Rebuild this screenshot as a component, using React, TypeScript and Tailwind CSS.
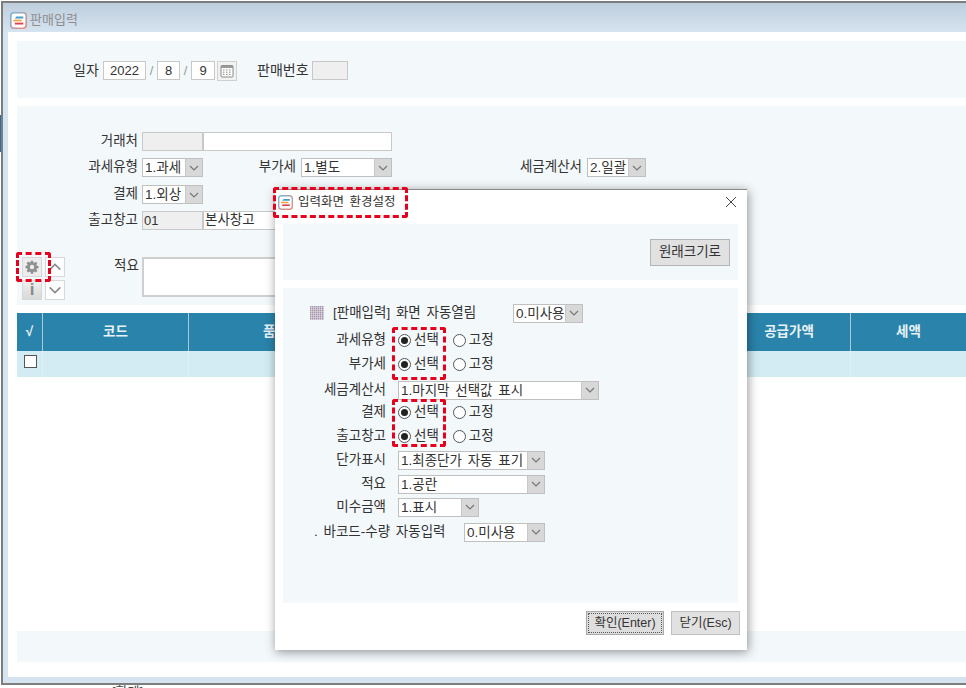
import React from "react";

const FONT = "font-['Liberation_Sans','Noto_Sans_CJK_KR',sans-serif]";

function Logo({ size = 16 }: { size?: number }) {
  return (
    <svg width={size} height={size} viewBox="0 0 16 16" className="shrink-0">
      <defs>
        <linearGradient id="lg" x1="0" y1="0" x2="1" y2="1">
          <stop offset="0" stopColor="#6fb7d8" />
          <stop offset="1" stopColor="#ef8a7a" />
        </linearGradient>
      </defs>
      <rect x="0.75" y="0.75" width="14.5" height="14.5" rx="3" fill="#fff" stroke="url(#lg)" strokeWidth="1.5" />
      <path d="M6 4.2h6.5v1.8H4.5z" fill="#3f9ccc" />
      <path d="M3.2 7.2h7.8v1.6H3.2z" fill="#f2a23c" />
      <path d="M4.5 10h8v1.8H4.5z" fill="#e2404f" />
    </svg>
  );
}

function Chevron({ up = false, big = false }: { up?: boolean; big?: boolean }) {
  return (
    <svg width={big ? 14 : 10} height={big ? 8 : 6} viewBox="0 0 10 6" className={up ? "rotate-180" : ""}>
      <path d="M1 1l4 4 4-4" fill="none" stroke={big ? "#8a8a8a" : "#777"} strokeWidth="1.2" />
    </svg>
  );
}

function Select({ w, label, arrow = 17 }: { w: string; label: string; arrow?: number }) {
  return (
    <div className={`flex h-[19px] shrink-0 border border-[#c0c0c0] bg-white ${w}`}>
      <span className="flex-1 overflow-hidden whitespace-nowrap pl-[2px] text-[13.5px] leading-[17px] text-[#333] [word-spacing:2px]">{label}</span>
      <span style={{ width: arrow }} className="flex items-center justify-center border-l border-[#c8c8c8] bg-[#d8d8d8]">
        <Chevron />
      </span>
    </div>
  );
}

function Radio({ on = false, label }: { on?: boolean; label: string }) {
  return (
    <span className="flex items-center gap-[3px]">
      <span className="flex h-[13px] w-[13px] items-center justify-center rounded-full border border-[#555] bg-white">
        {on && <span className="h-[7px] w-[7px] rounded-full bg-[#222]" />}
      </span>
      <span className="text-[13.5px] text-[#333]">{label}</span>
    </span>
  );
}

function Label({ children, w = "w-[103px]" }: { children: React.ReactNode; w?: string }) {
  return <span className={`shrink-0 whitespace-nowrap text-right text-[13.5px] text-[#333] ${w}`}>{children}</span>;
}

function RadioRow({ label, cls }: { label: string; cls: string }) {
  return (
    <div className={`flex h-[20px] items-center ${cls}`}>
      <Label>{label}</Label>
      <div className="ml-[12px] flex items-center gap-[14px]">
        <Radio on label="선택" />
        <Radio label="고정" />
      </div>
    </div>
  );
}

function SelectRow({ label, w, value, cls }: { label: string; w: string; value: string; cls: string }) {
  return (
    <div className={`flex h-[20px] items-center ${cls}`}>
      <Label>{label}</Label>
      <div className="ml-[12px]">
        <Select w={w} label={value} />
      </div>
    </div>
  );
}

function Box({ w, children, gray = false }: { w: string; children?: React.ReactNode; gray?: boolean }) {
  return (
    <span className={`flex h-[19px] shrink-0 items-center justify-center border border-[#c8c8c8] text-[13px] text-[#333] ${gray ? "bg-[#efefef]" : "bg-white"} ${w}`}>
      {children}
    </span>
  );
}

function Calendar() {
  return (
    <span className="ml-[2px] flex h-[20px] w-[20px] items-center justify-center border border-[#d0d0d0] bg-[#f2f2f2]">
      <svg width="14" height="14" viewBox="0 0 14 14">
        <rect x="1" y="1.5" width="12" height="11.5" rx="1" fill="#fff" stroke="#888" />
        <rect x="1" y="1.5" width="12" height="2.5" fill="#999" />
        <path d="M3 6h1.5M6 6h1.5M9 6h1.5M3 8.2h1.5M6 8.2h1.5M9 8.2h1.5M3 10.4h1.5M6 10.4h1.5M9 10.4h1.5" stroke="#888" />
      </svg>
    </span>
  );
}

function Gear() {
  return (
    <svg width="14" height="14" viewBox="0 0 14 14">
      <path
        fill="#8f8f8f"
        fillRule="evenodd"
        d="M5.9.7h2.2l.3 1.7 1 .4 1.4-1 1.6 1.6-1 1.4.4 1 1.7.3v2.2l-1.7.3-.4 1 1 1.4-1.6 1.6-1.4-1-1 .4-.3 1.7H5.9l-.3-1.7-1-.4-1.4 1-1.6-1.6 1-1.4-.4-1L.5 8.1V5.9l1.7-.3.4-1-1-1.4 1.6-1.6 1.4 1 1-.4zM7 4.8a2.2 2.2 0 100 4.4 2.2 2.2 0 000-4.4z"
      />
    </svg>
  );
}

function Dialog() {
  return (
    <div className="absolute left-[275px] top-[189px] flex h-[461px] w-[472px] flex-col border-t border-[#8a8a8a] bg-white shadow-[1px_2px_10px_rgba(0,0,0,0.42)]">
      <div className="flex h-[24px] shrink-0 items-center justify-between pl-[3px] pr-[10px]">
        <div className="flex items-center gap-[5px]">
          <Logo size={15} />
          <span className="text-[12.5px] text-[#333] [word-spacing:2px]">입력화면 환경설정</span>
        </div>
        <svg width="12" height="12" viewBox="0 0 12 12">
          <path d="M1 1l10 10M11 1L1 11" stroke="#444" strokeWidth="1" />
        </svg>
      </div>
      <div className="ml-[8px] mr-[9px] mt-[10px] flex h-[56px] shrink-0 items-center justify-end bg-[#f3f8fb] pr-[8px]">
        <button className="h-[27px] w-[80px] border border-[#b4b4b4] bg-[#e1e1e1] text-[13.5px] text-[#333]">원래크기로</button>
      </div>
      <div className="ml-[8px] mr-[9px] mt-[8px] h-[315px] shrink-0 bg-[#f3f8fb] pt-[15px]">
        <div className="flex h-[20px] items-center">
          <svg width="14" height="14" viewBox="0 0 14 14" className="ml-[27px] shrink-0">
            <defs>
              <linearGradient id="gr" x1="0" y1="0" x2="0" y2="1">
                <stop offset="0" stopColor="#a9a0c4" />
                <stop offset="1" stopColor="#8a7d96" />
              </linearGradient>
              <pattern id="gp" width="2" height="2" patternUnits="userSpaceOnUse">
                <rect width="1.4" height="1.4" fill="url(#gr)" />
              </pattern>
            </defs>
            <rect width="14" height="14" fill="#d8a0a0" opacity="0.25" />
            <rect width="14" height="14" fill="url(#gp)" />
          </svg>
          <span className="ml-[9px] w-[180px] shrink-0 whitespace-nowrap text-[13.5px] text-[#333] [word-spacing:2px]">[판매입력] 화면 자동열림</span>
          <Select w="w-[70px]" label="0.미사용" />
        </div>
        <RadioRow label="과세유형" cls="mt-[7px]" />
        <RadioRow label="부가세" cls="mt-1" />
        <SelectRow label="세금계산서" w="w-[201px]" value="1.마지막 선택값 표시" cls="mt-1.5" />
        <RadioRow label="결제" cls="mt-0.5" />
        <RadioRow label="출고창고" cls="mt-1" />
        <SelectRow label="단가표시" w="w-[147px]" value="1.최종단가 자동 표기" cls="mt-1" />
        <SelectRow label="적요" w="w-[147px]" value="1.공란" cls="mt-1" />
        <SelectRow label="미수금액" w="w-[81px]" value="1.표시" cls="mt-[3px]" />
        <div className="mt-[5px] flex h-[20px] items-center">
          <span className="ml-[31px] w-[150px] shrink-0 whitespace-nowrap text-[13.5px] text-[#333] [word-spacing:2px]">. 바코드-수량 자동입력</span>
          <Select w="w-[81px]" label="0.미사용" />
        </div>
      </div>
      <div className="ml-[8px] mr-[7px] mt-[8px] flex justify-end gap-[7px]">
        <button className="h-[24px] w-[78px] border border-[#a8a8a8] bg-[#dedede] p-[1px] text-[12.5px] text-[#333]">
          <span className="block h-full border border-dotted border-[#555] leading-[19px]">확인(Enter)</span>
        </button>
        <button className="h-[24px] w-[69px] border border-[#c0c0c0] bg-[#e1e1e1] text-[12.5px] text-[#333]">닫기(Esc)</button>
      </div>
    </div>
  );
}

function Marks() {
  const cls = "absolute rounded-[3px] border-[3px] border-dashed border-[#e8001c]";
  return (
    <>
      <div className={`${cls} left-[273px] top-[187px] h-[31px] w-[135px]`} />
      <div className={`${cls} left-[16px] top-[252px] h-[30px] w-[35px]`} />
      <div className={`${cls} left-[392px] top-[327px] h-[53px] w-[54px]`} />
      <div className={`${cls} left-[392px] top-[399px] h-[48px] w-[54px]`} />
    </>
  );
}

const TH = "flex h-[38px] items-center justify-center border-r border-[#a9c9d8] bg-[#2a83ab] font-bold text-[#e8f2f6]";
const TD = "h-[26px] border-r border-[#e2eff4] bg-[#d3ebf3]";

export default function App() {
  return (
    <div className={`relative h-[688px] w-[966px] overflow-hidden bg-white ${FONT}`}>
      <div className="absolute left-0 top-[115px] h-[37px] w-[1px] bg-[#2a6f96]" />
      <div className="ml-[1px] mt-[1px] flex h-[684px] flex-col border-b-2 border-l-2 border-t-2 border-[#7d7d7d] bg-[#d6e4f2]">
        <div className="flex h-[29px] shrink-0 items-center gap-[3px] bg-gradient-to-b from-[#bfcedc] to-[#d6e4f2] pl-[7px] pt-[5px]">
          <Logo size={17} />
          <span className="text-[13px] text-[#8e8e8e]">판매입력</span>
        </div>
        <div className="ml-[5px] mb-[6px] flex flex-1 flex-col bg-white pl-[9px] pt-[9px]">
          <div className="flex h-[57px] shrink-0 items-center bg-[#f3f8fb] pl-[56px] pt-[2px]">
            <span className="w-[30px] text-[14px] text-[#333]">일자</span>
            <Box w="w-[43px]">2022</Box>
            <span className="w-[11px] text-center text-[13px] text-[#999]">/</span>
            <Box w="w-[23px]">8</Box>
            <span className="w-[11px] text-center text-[13px] text-[#999]">/</span>
            <Box w="w-[24px]">9</Box>
            <Calendar />
            <span className="ml-[20px] w-[55px] whitespace-nowrap text-[14px] text-[#333]">판매번호</span>
            <Box w="w-[36px]" gray />
          </div>

          <div className="mt-[8px] h-[199px] shrink-0 bg-[#f3f8fb] pt-[26px]">
            <div className="flex h-[19px] items-center">
              <Label w="w-[121px]">거래처</Label>
              <div className="ml-[4px] flex">
                <Box w="w-[61px]" gray />
                <Box w="w-[189px]" />
              </div>
            </div>
            <div className="mt-[7px] flex h-[19px] items-center">
              <Label w="w-[121px]">과세유형</Label>
              <div className="ml-[4px]"><Select w="w-[61px]" label="1.과세" /></div>
              <Label w="w-[93px]">부가세</Label>
              <div className="ml-[5px]"><Select w="w-[91px]" label="1.별도" /></div>
              <Label w="w-[190px]">세금계산서</Label>
              <div className="ml-[5px]"><Select w="w-[59px]" label="2.일괄" /></div>
            </div>
            <div className="mt-[8px] flex h-[19px] items-center">
              <Label w="w-[121px]">결제</Label>
              <div className="ml-[4px]"><Select w="w-[61px]" label="1.외상" /></div>
            </div>
            <div className="mt-[7px] flex h-[19px] items-center">
              <Label w="w-[121px]">출고창고</Label>
              <div className="ml-[4px] flex">
                <span className="flex h-[19px] w-[61px] items-center border border-[#c8c8c8] bg-[#efefef] pl-[1px] text-[13px] text-[#333]">01</span>
                <span className="flex h-[19px] w-[200px] items-center border border-[#c8c8c8] bg-white pl-[1px] text-[13.5px] text-[#333]">본사창고</span>
              </div>
            </div>
            <div className="mt-[27px] flex">
              <div className="box-content grid w-[43px] grid-cols-[20px_20px] gap-x-[3px] gap-y-[3px] pl-[5px]">
                <span className="flex h-[20px] items-center justify-center border border-[#d8d8d8] bg-[#ededed]"><Gear /></span>
                <span className="flex h-[20px] items-center justify-center border border-[#d8d8d8] bg-white"><Chevron up big /></span>
                <span className="flex h-[20px] items-center justify-center border border-[#d8d8d8] bg-gradient-to-b from-[#f0f0f0] to-[#d8d8d8] text-[17px] font-bold text-[#888]">i</span>
                <span className="flex h-[20px] items-center justify-center border border-[#d8d8d8] bg-white"><Chevron big /></span>
              </div>
              <span className="-mt-[1px] ml-[49px] w-[24px] whitespace-nowrap text-[13.5px] text-[#333]">적요</span>
              <div className="ml-[4px] h-[40px] w-[400px] border-2 border-[#cfcfcf] bg-white" />
            </div>
          </div>

          <div className="mt-[8px] grid shrink-0 grid-cols-[26px_146px_174px_365px_123px_1fr] text-[13.5px]">
            <div className={TH}>√</div>
            <div className={TH}>코드</div>
            <div className={TH}>품명</div>
            <div className="h-[38px] border-r border-[#a9c9d8] bg-[#2a83ab]" />
            <div className={TH}>공급가액</div>
            <div className="flex h-[38px] items-center justify-center bg-[#2a83ab] font-bold text-[#e8f2f6]">세액</div>
            <div className="flex h-[26px] items-start justify-center border-r border-[#e2eff4] bg-[#d3ebf3] pl-[1px] pt-[4px]">
              <span className="h-[13px] w-[13px] border border-[#555] bg-white" />
            </div>
            <div className={TD} />
            <div className={TD} />
            <div className={TD} />
            <div className={TD} />
            <div className="h-[26px] bg-[#d3ebf3]" />
          </div>

          <div className="mt-[254px] h-[31px] shrink-0 bg-[#f3f8fb]" />
        </div>
      </div>
      <div className="ml-[112px] h-[3px] overflow-hidden text-[13px] leading-[13px] text-[#444]">[합계]</div>
      <Dialog />
      <Marks />
    </div>
  );
}
